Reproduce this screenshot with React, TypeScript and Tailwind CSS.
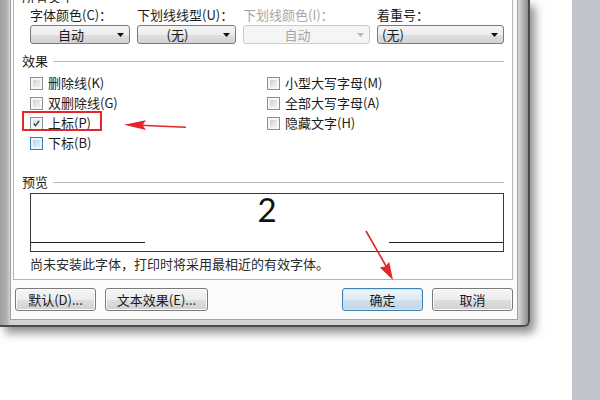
import React from "react";

const font = "font-['Noto_Sans_CJK_SC','Noto_Sans',sans-serif]";

const Tri = ({ color }: { color: string }) => (
  <svg width="7" height="4" viewBox="0 0 7 4">
    <path d="M0 0h7L3.5 4z" fill={color} />
  </svg>
);

const Combo = ({ text, left = false, disabled = false }: { text: string; left?: boolean; disabled?: boolean }) => (
  <div
    className={`flex h-[19px] items-center rounded-[3px] border ${
      disabled
        ? "border-[#c8cbce] bg-[#f5f5f5] text-[#a6a6a6]"
        : "border-[#7a7a7a] bg-[linear-gradient(#f5f5f5,#ededed_50%,#e0e0e0_50%,#d3d3d3)] text-[#1a1a1a]"
    }`}
  >
    <span className={`flex-1 text-[13px] leading-[17px] ${left ? "pl-[4px] text-left" : "text-center"}`}>{text}</span>
    <span className="flex w-[18px] justify-center">
      <Tri color={disabled ? "#b8b8b8" : "#111111"} />
    </span>
  </div>
);

const Check = ({ on = false, hot = false }: { on?: boolean; hot?: boolean }) => (
  <span
    className={`flex h-[13px] w-[13px] shrink-0 border p-[2px] ${
      hot ? "border-[#3d7bad] bg-[#eaf5fc]" : "border-[#8f8f8f] bg-[#f6f6f6]"
    }`}
  >
    <span
      className={`flex h-full w-full items-center justify-center ${
        hot
          ? "bg-[linear-gradient(135deg,#b3d6ee,#e3f1fa)]"
          : on
            ? "bg-[linear-gradient(135deg,#dcdfe4,#f7f7f7)]"
            : "bg-[linear-gradient(135deg,#d0d0d0,#f3f3f3)]"
      }`}
    >
      {on && (
        <svg width="9" height="9" viewBox="0 0 9 9">
          <path d="M1 4.5l2.3 2.8L8 1" fill="none" stroke="#2a3c66" strokeWidth="1.7" />
        </svg>
      )}
    </span>
  </span>
);

const Option = ({ label, on, hot, mark }: { label: string; on?: boolean; hot?: boolean; mark?: boolean }) => (
  <div className="relative flex h-[20px] items-center gap-[5px]">
    <Check on={on} hot={hot} />
    <span className="leading-[16px]">{label}</span>
    {mark && <div className="absolute -left-[8px] top-[-2px] h-[20px] w-[80px] border-2 border-[#e3262b]" />}
  </div>
);

const Btn = ({ label, w, primary = false }: { label: string; w: string; primary?: boolean }) => (
  <button
    className={`flex h-[23px] ${w} items-center justify-center rounded-[3px] border text-[13px] leading-[16px] text-[#1a1a1a] ${
      primary
        ? "border-[#3c7fb1] bg-[linear-gradient(#edf4f9,#e0ebf3_50%,#cfdfeb_50%,#c3d7e6)] shadow-[inset_0_0_0_1px_#cde7f7]"
        : "border-[#7a7a7a] bg-[linear-gradient(#f5f5f5,#ededed_50%,#dfdfdf_50%,#d1d1d1)] shadow-[inset_0_0_0_1px_#fbfbfb]"
    }`}
  >
    {label}
  </button>
);

const Group = ({ title }: { title: string }) => (
  <div className="flex h-[16px] items-center gap-[5px]">
    <span className="leading-[16px]">{title}</span>
    <div className="h-px flex-1 bg-[#bcbcbc]" />
  </div>
);

export default function App() {
  return (
    <div className={`relative flex h-[400px] w-[600px] items-start overflow-hidden bg-white ${font} text-[13px] text-[#1c1c1c]`}>
      {/* dialog window */}
      <div className="flex h-[327px] w-[530px] shrink-0 flex-col rounded-br-[6px] border-r-2 border-b-2 border-[#4a4a4a] bg-[linear-gradient(90deg,#9f9f9f,#b2b2b2_7px,#d3d3d3_10px,#d3d3d3_calc(100%_-_9px),#acacac_calc(100%_-_4px),#8a8a8a)] pr-[10px] pb-[5px] pl-[10px] shadow-[5px_6px_10px_rgba(0,0,0,0.45)]">
        <div className="flex flex-1 flex-col border-x border-b border-[#a2a2a2] bg-[#fbfbfb]">
          {/* tab page */}
          <div className="ml-[2px] flex w-[500px] flex-col border-x border-b border-[#b4b4b4] bg-white px-[8px] pb-[7px]">
            <div className="flex h-[3px] flex-col justify-end overflow-hidden">
              <span className="leading-[13px]">所有文字</span>
            </div>
            <div className="mt-[4px] grid grid-cols-[100px_99px_127px_127px] grid-rows-[16px_19px] gap-x-[7px] gap-y-[2px] pl-[8px]">
              <span className="leading-[16px]">字体颜色(C)：</span>
              <span className="leading-[16px]">下划线线型(U)：</span>
              <span className="leading-[16px] text-[#a6a6a6]">下划线颜色(I)：</span>
              <span className="leading-[16px]">着重号：</span>
              <Combo text="自动" />
              <Combo text="(无)" />
              <Combo text="自动" disabled />
              <Combo text="(无)" left />
            </div>

            <div className="mt-[9px]">
              <Group title="效果" />
            </div>
            <div className="mt-[4px] grid grid-cols-[237px_1fr] pl-[8px]">
              <Option label="删除线(K)" />
              <Option label="小型大写字母(M)" />
              <Option label="双删除线(G)" />
              <Option label="全部大写字母(A)" />
              <Option label="上标(P)" on mark />
              <Option label="隐藏文字(H)" />
              <Option label="下标(B)" hot />
            </div>

            <div className="mt-[21px]">
              <Group title="预览" />
            </div>
            <div className="mt-[3px] pl-[8px]">
              <div className="flex h-[59px] flex-col border border-[#3a3a3a] bg-white">
                <div className="text-center font-['Lato',sans-serif] text-[33px] leading-[30px] text-[#111]">2</div>
                <div className="mt-auto mb-[8px] flex justify-between">
                  <div className="h-px w-[114px] bg-[#222]" />
                  <div className="h-px w-[114px] bg-[#222]" />
                </div>
              </div>
            </div>
            <div className="mt-[4px] h-[16px] pl-[8px] leading-[16px] text-[#2a2a2a]">尚未安装此字体，打印时将采用最相近的有效字体。</div>
          </div>

          {/* buttons */}
          <div className="flex flex-1 items-center px-[4px]">
            <Btn label="默认(D)..." w="w-[81px]" />
            <div className="w-[9px]" />
            <Btn label="文本效果(E)..." w="w-[103px]" />
            <div className="flex-1" />
            <Btn label="确定" w="w-[81px]" primary />
            <div className="w-[9px]" />
            <Btn label="取消" w="w-[81px]" />
          </div>
        </div>
      </div>

      <div className="flex-1" />
      <div className="w-[28px] self-stretch bg-[#c1c4cb]" />

      {/* red annotation arrows */}
      <svg className="pointer-events-none absolute top-0 left-0" width="600" height="400" viewBox="0 0 600 400">
        <line x1="186" y1="127.2" x2="140" y2="125.2" stroke="#e3262b" strokeWidth="1.6" />
        <polygon points="124,124.8 146,120.2 142.5,125.3 146,130" fill="#e3262b" />
        <line x1="366" y1="231" x2="386" y2="266" stroke="#e3262b" strokeWidth="1.6" />
        <polygon points="393,280 379.8,267.6 385.6,266.3 389.2,261.8" fill="#e3262b" />
      </svg>
    </div>
  );
}
